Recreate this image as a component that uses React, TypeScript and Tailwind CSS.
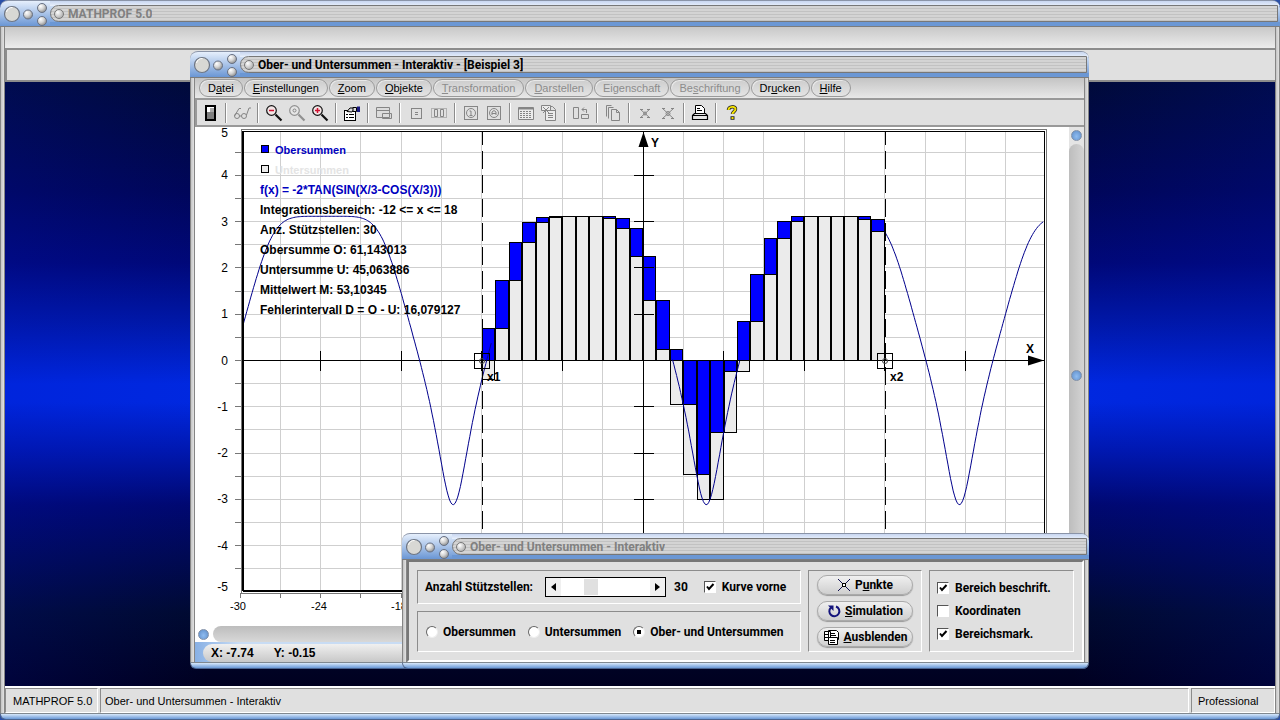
import type { ReactNode } from 'react';
import clsx from 'clsx';

const BASE_X = 448;
const BASE_Y = 233.5;
const UNIT_X = 13.43;
const UNIT_Y = 46.3;

const px = (x: number) => BASE_X + x * UNIT_X;
const py = (y: number) => BASE_Y - y * UNIT_Y;
const snap = (v: number) => Math.floor(v) + 0.5;

const f = (x: number) => -2 * Math.tan(Math.sin(x / 3 - Math.cos(x / 3)));

const from = -12;
const steps = 30;

const range = (start: number, end: number, step: number) =>
  Array.from({ length: Math.round((end - start) / step) + 1 }, (_, i) => start + i * step);

// the curve is hidden where it runs through the filled bars
const curves = [
  [-29.8, -11.3],
  [2.2, 7.2],
  [18, 29.8],
].map(([start, end]) =>
  range(start, end, 0.1)
    .map((x) => `${px(x).toFixed(1)},${py(f(x)).toFixed(1)}`)
    .join(' '),
);

const menu = [
  { pre: 'D', key: 'a', post: 'tei' },
  { pre: '', key: 'E', post: 'instellungen' },
  { pre: '', key: 'Z', post: 'oom' },
  { pre: '', key: 'O', post: 'bjekte' },
  { pre: '', key: 'T', post: 'ransformation', off: true },
  { pre: '', key: 'D', post: 'arstellen', off: true },
  { pre: 'Ei', key: 'g', post: 'enschaft', off: true },
  { pre: 'Be', key: 's', post: 'chriftung', off: true },
  { pre: 'Dr', key: 'u', post: 'cken' },
  { pre: '', key: 'H', post: 'ilfe' },
];

const info = [
  'Integrationsbereich: -12 <= x <= 18',
  'Anz. Stützstellen: 30',
  'Obersumme O: 61,143013',
  'Untersumme U: 45,063886',
  'Mittelwert M: 53,10345',
  'Fehlerintervall D = O - U: 16,079127',
];

/* ---------- window chrome ---------- */

function Knobs() {
  return (
    <svg width="50" height="26" viewBox="0 0 50 26" className="shrink-0" aria-hidden="true">
      <defs>
        <radialGradient id="knob" cx="0.35" cy="0.3" r="0.75">
          <stop offset="0" stopColor="#ffffff" />
          <stop offset="0.5" stopColor="#d4d4d4" />
          <stop offset="1" stopColor="#8a8a8a" />
        </radialGradient>
      </defs>
      <circle cx="12" cy="13" r="7.5" fill="#d8d8d4" stroke="#6e7684" strokeWidth="1.2" />
      <path d="M6.5 11a6 6 0 0 1 6-4.5" fill="none" stroke="#fff" />
      <circle cx="28" cy="13.5" r="4.5" fill="url(#knob)" stroke="#667084" />
      <circle cx="42" cy="7" r="4.5" fill="url(#knob)" stroke="#667084" />
      <circle cx="42" cy="20" r="4.5" fill="url(#knob)" stroke="#667084" />
    </svg>
  );
}

function TitleBar({ title, active }: { title: string; active?: boolean }) {
  return (
    <header className="flex h-[27px] shrink-0 items-center overflow-hidden rounded-t-lg border-t border-b border-t-[#8a94a8] border-b-[#7c7c7c] bg-linear-to-b from-[#e6effc] via-[#a9c3e8] to-[#6a96d4]">
      <Knobs />
      <div className="relative flex h-full min-w-0 flex-1 items-center">
        <div className="absolute inset-x-0 top-0 h-[5px] bg-linear-to-b from-[#c8d6f0] to-[#e8f0fc]" />
        <div className="absolute inset-x-0 bottom-0 h-[4px] bg-[#6b97d4]" />
        <div className="relative mr-[2px] flex h-[17px] w-full items-center gap-1 rounded-l-full border border-[#777] bg-[repeating-linear-gradient(to_bottom,#d4d4d4_0_2px,#c2c2c2_2px_3px)] pl-[3px]">
          <span className="size-[10px] shrink-0 rounded-full border border-[#777] bg-radial-[at_35%_30%] from-white to-[#9a9a9a]" />
          <h2
            className={clsx(
              "truncate font-['Roboto',sans-serif] text-[12px] leading-[14px] font-bold",
              active ? 'text-black' : 'text-[#808080]',
            )}
          >
            {title}
          </h2>
        </div>
      </div>
    </header>
  );
}

function BottomEdge() {
  return (
    <div className="h-[7px] shrink-0 rounded-b-md border border-t-[#808890] border-r-[#5c6c8c] border-b-[#4a6490] border-l-[#5c6c8c] bg-linear-to-b from-[#d8e8fa] to-[#6a98d6]" />
  );
}

function SideEdge() {
  return (
    <div className="w-[5px] shrink-0 border-r border-l border-[#858585] bg-linear-to-r from-[#c4c4c4] to-[#e2e2e2]" />
  );
}

function Ball() {
  return (
    <span className="block size-[11px] shrink-0 rounded-full border border-[#8090a8] bg-radial-[at_50%_60%] from-[#8fbcf0] to-[#5d8cc8]" />
  );
}

/* ---------- toolbar ---------- */

function Icon({ children }: { children: ReactNode }) {
  return (
    <svg width="18" height="18" viewBox="0 0 18 18" fill="none" stroke="#858585" aria-hidden="true">
      {children}
    </svg>
  );
}

function Lens({ color, sign, tint }: { color: string; sign: ReactNode; tint: string }) {
  return (
    <Icon>
      <circle cx="6.5" cy="6.5" r="4.8" stroke={color} strokeWidth="1.2" fill={tint} />
      {sign}
      <path d="M10.5 10.5l6 6" stroke={color} strokeWidth="2.2" />
    </Icon>
  );
}

const icons = {
  calc: (
    <Icon>
      <rect x="5" y="2" width="9" height="14" fill="#808080" stroke="#000" strokeWidth="2" />
      <path d="M6 5.5h7" stroke="#fff" strokeWidth="5" />
      <path d="M9 6h4" stroke="#aaa" strokeWidth="4" />
    </Icon>
  ),
  glasses: (
    <Icon>
      <circle cx="4" cy="12" r="2.5" />
      <circle cx="11" cy="12" r="2.5" />
      <path d="M6.5 12h2M1.5 12L6 4.5h2M13.5 11L16 4h2" />
    </Icon>
  ),
  zoomOut: <Lens color="#111" tint="#f3e6e6" sign={<path d="M4 6.5h5" stroke="#d01030" strokeWidth="1.5" />} />,
  zoomReset: <Lens color="#909090" tint="#e6e6e6" sign={<circle cx="6.5" cy="6.5" r="1.5" />} />,
  zoomIn: (
    <Lens color="#111" tint="#f3e6e6" sign={<path d="M4 6.5h5M6.5 4v5" stroke="#d01030" strokeWidth="1.5" />} />
  ),
  props: (
    <Icon>
      <rect x="1.5" y="6.5" width="11" height="10" fill="#fff" stroke="#000" />
      <path d="M3 10.5h2M6 10.5h5M3 13.5h2M6 13.5h5" stroke="#000" />
      <path d="M4 7.5l3-3.5h5l-3 4z" fill="#ddd" stroke="#000" />
      <path d="M10 3.5h3.5v4H10z" fill="#ddd" stroke="#000" />
      <path d="M14 2.5h3v5.5h-3z" fill="#1a1a80" stroke="none" />
    </Icon>
  ),
  panels: (
    <Icon>
      <path d="M1.5 3.5h13v10h-13zM1.5 6.5h13M7.5 9.5h9v5h-9z" fill="#dcdcdc" />
    </Icon>
  ),
  dot: (
    <Icon>
      <rect x="4.5" y="4.5" width="10" height="10" />
      <path d="M8 8.5h3M8 10.5h3" />
    </Icon>
  ),
  pair: (
    <Icon>
      <path d="M1.5 4.5h15v9h-15z" strokeDasharray="1 1" />
      <path d="M4.5 5.5h3v7h-3zM10.5 5.5h3v7h-3z" />
    </Icon>
  ),
  info: (
    <Icon>
      <rect x="2.5" y="2.5" width="13" height="13" />
      <circle cx="9" cy="9" r="4.5" />
      <path d="M7.5 7h1.5v4M7.5 11.5h3" />
    </Icon>
  ),
  at: (
    <Icon>
      <rect x="2.5" y="2.5" width="13" height="13" />
      <circle cx="9" cy="9" r="4.5" />
      <path d="M7 11V8l2-1.5L11 8v3M7 9.5h4" />
    </Icon>
  ),
  table: (
    <Icon>
      <path d="M1.5 3.5h15v12h-15z" fill="#ececec" />
      <path d="M2 4.5h14" strokeWidth="2" />
      <path d="M3 7.5h12M3 9.5h12M3 11.5h12M3 13.5h12" strokeDasharray="2 1" />
    </Icon>
  ),
  report: (
    <Icon>
      <path d="M1.5 1.5h9v5h-9zM5.5 6.5h10v10h-10z" fill="#ececec" />
      <path d="M3 3l6 6M9 3L3 9M8 9.5h5M8 11.5h5M8 13.5h5M10.5 2.5h2l3 3v2" />
    </Icon>
  ),
  swap: (
    <Icon>
      <path d="M1.5 3.5h5v11h-5zM9.5 10.5h7v4h-7zM14.5 9V5.5H10M12 3.5L10 5.5l2 2" />
    </Icon>
  ),
  copies: (
    <Icon>
      <path d="M2.5 12.5v-11h5M4.5 14.5v-11h5M7.5 5.5h5l3 3v8h-8zM12.5 5.5v3h3" />
    </Icon>
  ),
  cross: (
    <Icon>
      <path d="M4 5l10 9M14 5L4 14M4 5.5h3M11 5.5h3M4 13.5h3M11 13.5h3" />
      <circle cx="9" cy="9.5" r="1.5" />
    </Icon>
  ),
  crossBox: (
    <Icon>
      <path d="M3 4l12 11M15 4L3 15M3 4.5h3M12 4.5h3M3 14.5h3M12 14.5h3" />
      <circle cx="9" cy="9.5" r="2" />
    </Icon>
  ),
  print: (
    <Icon>
      <path d="M4.5 9.5v-8h6l3 3v5" fill="#fff" stroke="#000" />
      <path d="M6 4.5h3M6 6.5h5" stroke="#000" />
      <path d="M1.5 11.5l2-2h11l2 2v4h-15z" fill="#e4e4e4" stroke="#000" strokeWidth="1.2" />
      <path d="M1.5 11.5h15" stroke="#000" />
    </Icon>
  ),
  help: (
    <Icon>
      <path d="M5.5 6c0-4 7-4 7-1 0 2.5-3 3-3 5" stroke="#222" strokeWidth="3.500" />
      <path d="M7.5 14h4" stroke="#222" strokeWidth="3.500" />
      <path d="M5.5 6c0-4 7-4 7-1 0 2.5-3 3-3 5M9.500 13v2" stroke="#f2e000" strokeWidth="2" />
    </Icon>
  ),
};

const toolbar: { id: keyof typeof icons; label: string; off?: boolean }[][] = [
  [{ id: 'calc', label: 'Rechner' }],
  [{ id: 'glasses', label: 'Ansicht', off: true }],
  [
    { id: 'zoomOut', label: 'Verkleinern' },
    { id: 'zoomReset', label: 'Originalgröße', off: true },
    { id: 'zoomIn', label: 'Vergrößern' },
  ],
  [{ id: 'props', label: 'Einstellungen' }],
  [{ id: 'panels', label: 'Fenster', off: true }],
  [
    { id: 'dot', label: 'Punkt', off: true },
    { id: 'pair', label: 'Bereich', off: true },
  ],
  [
    { id: 'info', label: 'Info', off: true },
    { id: 'at', label: 'Beschriftung', off: true },
  ],
  [
    { id: 'table', label: 'Tabelle', off: true },
    { id: 'report', label: 'Bericht', off: true },
  ],
  [{ id: 'swap', label: 'Tauschen', off: true }],
  [{ id: 'copies', label: 'Kopieren', off: true }],
  [
    { id: 'cross', label: 'Punkte', off: true },
    { id: 'crossBox', label: 'Punkte löschen', off: true },
  ],
  [{ id: 'print', label: 'Drucken' }],
  [{ id: 'help', label: 'Hilfe' }],
];

/* ---------- chart ---------- */

function Bars() {
  return (
    <g stroke="#000">
      {Array.from({ length: steps }, (_, i) => {
        const x = from + i;
        const lo = Math.min(f(x), f(x + 1));
        const hi = Math.max(f(x), f(x + 1));
        const left = snap(px(x) + 0.5);
        const width = snap(px(x + 1) + 0.5) - 1 - left;
        const bar = (v: number, fill: string) => (
          <rect
            key={fill}
            x={left}
            y={snap(Math.min(py(v), BASE_Y))}
            width={width}
            height={Math.round(Math.abs(py(v) - BASE_Y))}
            fill={fill}
          />
        );
        const upper = bar(hi, '#0000ff');
        const lower = bar(lo, '#ebebeb');
        return <g key={x}>{hi > 0 ? [upper, lower] : [lower, upper]}</g>;
      })}
    </g>
  );
}

function Chart() {
  return (
    <svg viewBox="0 0 874 499" preserveAspectRatio="xMinYMin slice" className="block size-full bg-white text-[11px]">
      <g stroke="#cfcfcf" shapeRendering="crispEdges">
        {range(-27, 27, 3).map((x) => (
          <line key={x} x1={snap(px(x))} x2={snap(px(x))} y1="5" y2="464" />
        ))}
        {range(-4.5, 4.5, 0.5).map((y) => (
          <line key={y} x1="48" x2="849" y1={snap(py(y))} y2={snap(py(y))} />
        ))}
      </g>

      <g shapeRendering="crispEdges">
        <Bars />
      </g>

      <g stroke="#000" shapeRendering="crispEdges">
        <line x1="48" x2="850" y1="233.5" y2="233.5" />
        <line x1="448.5" x2="448.5" y1="5" y2="464" />
        {range(-24, 24, 6).map((x) => (
          <line key={x} x1={snap(px(x))} x2={snap(px(x))} y1="224" y2="244" />
        ))}
        {range(-4, 4, 1).map((y) => (
          <line key={y} x1="439" x2="459" y1={snap(py(y))} y2={snap(py(y))} />
        ))}
      </g>

      {curves.map((points) => (
        <polyline key={points} points={points} fill="none" stroke="#00008c" />
      ))}

      <g stroke="#000" strokeDasharray="18 6" strokeDashoffset="5" shapeRendering="crispEdges">
        <line x1="287.5" x2="287.5" y1="5" y2="464" />
        <line x1="690.5" x2="690.5" y1="5" y2="464" />
      </g>

      <path d="M448.5 5l5 15h-10zM849 233.5l-16 5v-10z" />
      {[287, 690].map((x) => (
        <g key={x} fill="none" stroke="#000">
          <rect x={x - 7.5} y="226.5" width="15" height="15" />
          <circle cx={x} cy="234" r="2.5" stroke="#444" />
        </g>
      ))}

      {/* plot frame */}
      <g fill="none" shapeRendering="crispEdges">
        <path d="M46.5 466V2.5H851.5V466" stroke="#777" />
        <path d="M47.5 464V4.5H849.5V464.500H48" stroke="#000" />
        <path d="M46 466.5h806" stroke="#777" />
        <path d="M48.5 464V5M849 463.5H48" stroke="#000" />
        {range(-4.5, 4.5, 0.5).map((y) => (
          <line key={y} x1="40" x2="46" y1={snap(py(y))} y2={snap(py(y))} stroke="#777" />
        ))}
        {range(-30, 30, 3).map((x) => (
          <line key={x} x1={snap(px(x))} x2={snap(px(x))} y1="466" y2="471" stroke="#777" />
        ))}
      </g>

      <g textAnchor="end" fontSize="12">
        {range(-4, 4, 1).map((y) => (
          <text key={y} x="33" y={Math.round(py(y)) + 4}>
            {y}
          </text>
        ))}
        <text x="33" y="10">5</text>
        <text x="33" y="464">-5</text>
      </g>
      <g textAnchor="middle">
        {range(-30, -18, 6).map((x) => (
          <text key={x} x={Math.round(px(x)) - 2} y="483">
            {x}
          </text>
        ))}
      </g>

      <g fontWeight="bold">
        <rect x="66.5" y="18.5" width="7" height="7" fill="#0000ff" stroke="#000" />
        <rect x="66.5" y="38.5" width="7" height="7" fill="#ebebeb" stroke="#000" />
        <text x="80" y="27" fill="#0000c0">Obersummen</text>
        <text x="80" y="47" fill="#e4e4e4">Untersummen</text>
        <g fontSize="12">
          <text x="65" y="67" fill="#0000c0">f(x) = -2*TAN(SIN(X/3-COS(X/3)))</text>
          {info.map((line, i) => (
            <text key={line} x="65" y={87 + i * 20}>
              {line}
            </text>
          ))}
          <text x="456" y="20">Y</text>
          <text x="831" y="226">X</text>
          <text x="292" y="254">x1</text>
          <text x="695" y="254">x2</text>
        </g>
      </g>
    </svg>
  );
}

function PlotWindow() {
  return (
    <section className="absolute top-[51px] left-[190px] flex h-[618px] w-[899px] flex-col">
      <TitleBar title="Ober- und Untersummen - Interaktiv - [Beispiel 3]" active />
      <div className="flex min-h-0 flex-1">
        <SideEdge />
        <div className="flex min-w-0 flex-1 flex-col">
          <nav className="flex h-[22px] shrink-0 items-center gap-px border-b-2 border-[#999] bg-linear-to-b from-[#c4c4c4] to-[#e8e8e8] pl-1">
            {menu.map((m) => (
              <button
                key={m.pre + m.key + m.post}
                disabled={m.off}
                className="h-[18px] rounded-full border border-[#9a9a9a] bg-linear-to-b from-[#cdcdcd] to-[#e4e4e4] px-2 text-[11px] leading-4 shadow-[inset_1px_1px_0_#e8e8e8] disabled:text-[#8c8c8c]"
              >
                {m.pre}
                <u>{m.key}</u>
                {m.post}
              </button>
            ))}
          </nav>
          <div className="flex h-[27px] shrink-0 items-center border-b-2 border-l-2 border-[#999] bg-[#e0e0e0] pl-px">
            {toolbar.map((group, i) => (
              <div key={i} className="flex items-center">
                {i > 0 && <span className="mx-1 h-5 w-px bg-[#8c8c8c] shadow-[1px_0_0_#fff]" />}
                {group.map((b) => (
                  <button key={b.id} aria-label={b.label} disabled={b.off} className="flex w-[23px] justify-center">
                    {icons[b.id]}
                  </button>
                ))}
              </div>
            ))}
          </div>
          <div className="flex min-h-0 flex-1">
            <div className="min-w-0 flex-1">
              <Chart />
            </div>
            <div className="flex w-[15px] flex-col items-center bg-[#e4e4e4]">
              <div className="py-[3px]">
                <Ball />
              </div>
              <div className="flex w-full flex-1 items-center justify-center rounded-t-full bg-linear-to-r from-[#bdbdbd] to-[#d4d4d4] pb-5">
                <Ball />
              </div>
            </div>
          </div>
          <div className="flex h-[16px] shrink-0 items-center bg-white pl-[3px]">
            <Ball />
            <div className="ml-1 h-full flex-1 rounded-l-full bg-linear-to-b from-[#bdbdbd] to-[#d8d8d8]" />
          </div>
          <footer className="flex h-[20px] shrink-0 items-end bg-linear-to-r from-[#88b0e4] to-[#c8dcf4] to-5% pl-2">
            <div className="flex h-[18px] flex-1 items-center gap-5 rounded-l-full bg-linear-to-b from-[#f0f0f0] to-[#c8c8c8] pl-2 text-[12px] font-bold">
              <span>X: -7.74</span>
              <span>Y: -0.15</span>
            </div>
          </footer>
        </div>
        <SideEdge />
      </div>
      <BottomEdge />
    </section>
  );
}

/* ---------- dialog ---------- */

function Panel({ className, children }: { className?: string; children: ReactNode }) {
  return (
    <div className={clsx('border border-t-[#8c8c8c] border-r-white border-b-white border-l-[#8c8c8c]', className)}>
      {children}
    </div>
  );
}

function Check({ label, checked }: { label: string; checked?: boolean }) {
  return (
    <label className="flex items-center gap-[6px]">
      <span className="relative flex size-[12px]">
        <input
          type="checkbox"
          defaultChecked={checked}
          className="peer size-[12px] appearance-none border border-t-[#555] border-r-white border-b-white border-l-[#555] bg-white"
        />
        <svg
          viewBox="0 0 12 12"
          className="pointer-events-none absolute inset-0 hidden peer-checked:block"
          fill="none"
          stroke="#000"
          strokeWidth="2"
        >
          <path d="M3 5.5l2 2.5 4.5-5" />
        </svg>
      </span>
      {label}
    </label>
  );
}

function Radio({ label, checked }: { label: string; checked?: boolean }) {
  return (
    <label className="flex items-center gap-[5px]">
      <input
        type="radio"
        name="summe"
        defaultChecked={checked}
        className="size-[12px] appearance-none rounded-full border border-t-[#666] border-r-[#eee] border-b-[#eee] border-l-[#666] bg-white checked:bg-radial checked:from-black checked:from-30% checked:to-white checked:to-35%"
      />
      {label}
    </label>
  );
}

function PillButton({ icon, children }: { icon: ReactNode; children: ReactNode }) {
  return (
    <button className="flex h-5 items-center justify-center gap-1 rounded-full border border-[#aaa] bg-linear-to-b from-[#f0f0f0] to-[#cfcfcf] font-bold shadow-[0_1px_1px_#999]">
      {icon}
      <span>{children}</span>
    </button>
  );
}

function Dialog() {
  return (
    <section className="absolute top-[533px] left-[402px] flex h-[136px] w-[687px] flex-col font-['Roboto',sans-serif] text-[12px] font-bold whitespace-nowrap">
      <TitleBar title="Ober- und Untersummen - Interaktiv" />
      <div className="flex min-h-0 flex-1">
        <SideEdge />
        <div className="flex min-w-0 flex-1 gap-[7px] border-2 border-[#777] border-r-white border-b-white bg-[#e0e0e0] px-2 py-2">
          <div className="flex flex-1 flex-col gap-[7px]">
            <Panel className="flex h-[34px] items-center px-[7px]">
              <label htmlFor="anzahl">Anzahl Stützstellen:</label>
              <div className="ml-3 flex h-5 w-[121px] items-stretch border border-black bg-white">
                <button aria-label="Weniger" className="flex w-[15px] items-center justify-center bg-[#f0f0f0]">
                  <svg width="5" height="8" viewBox="0 0 5 8">
                    <path d="M5 0v8L0 4z" />
                  </svg>
                </button>
                <input
                  id="anzahl"
                  type="range"
                  min="0"
                  max="100"
                  defaultValue="30"
                  className="min-w-0 flex-1 appearance-none bg-white [&::-webkit-slider-thumb]:h-[16px] [&::-webkit-slider-thumb]:w-[14px] [&::-webkit-slider-thumb]:appearance-none [&::-webkit-slider-thumb]:bg-[#e0e0e0]"
                />
                <button aria-label="Mehr" className="flex w-[15px] items-center justify-center bg-[#f0f0f0]">
                  <svg width="5" height="8" viewBox="0 0 5 8">
                    <path d="M0 0v8l5-4z" />
                  </svg>
                </button>
              </div>
              <output htmlFor="anzahl" className="mr-4 ml-2">30</output>
              <Check label="Kurve vorne" checked />
            </Panel>
            <Panel className="flex flex-1 items-center gap-3 px-2">
              <Radio label="Obersummen" />
              <Radio label="Untersummen" />
              <Radio label="Ober- und Untersummen" checked />
            </Panel>
          </div>
          <Panel className="flex w-[114px] flex-col justify-between px-2 py-[4px]">
            <PillButton
              icon={
                <svg width="14" height="14" viewBox="0 0 14 14" fill="none" stroke="#101050" aria-hidden="true">
                  <path d="M1 1l12 12M13 1L1 13" />
                  <rect x="5.5" y="5.5" width="3" height="3" fill="#fff" stroke="#000" />
                </svg>
              }
            >
              P<u>u</u>nkte
            </PillButton>
            <PillButton
              icon={
                <svg width="14" height="14" viewBox="0 0 14 14" fill="none" stroke="#14147c" aria-hidden="true">
                  <path d="M9 2.5a5 5 0 1 1-5 1" strokeWidth="2" />
                  <path d="M1 1.5h5.5V7z" fill="#14147c" stroke="none" />
                </svg>
              }
            >
              <u>S</u>imulation
            </PillButton>
            <PillButton
              icon={
                <svg width="17" height="17" viewBox="0 0 17 17" fill="#fff" stroke="#000" aria-hidden="true">
                  <path d="M1.5 2.5h6v9h-6zM5.5 1.5h8l2 2v7h-10z" />
                  <path d="M5.5 8.5h9v7h-9zM7 4.5h5M7 6.5h6M7 11.5h5M7 13.5h5M1 5.5h4M2 8.5h3" />
                </svg>
              }
            >
              <u>A</u>usblenden
            </PillButton>
          </Panel>
          <Panel className="flex w-[145px] flex-col justify-between px-[7px] py-2">
            <Check label="Bereich beschrift." checked />
            <Check label="Koordinaten" />
            <Check label="Bereichsmark." checked />
          </Panel>
        </div>
        <SideEdge />
      </div>
      <BottomEdge />
    </section>
  );
}

export default function App() {
  return (
    <main className="relative flex h-screen w-full flex-col overflow-hidden bg-[#2a50a8] font-['Liberation_Sans',Arial,sans-serif] text-black">
      <TitleBar title="MATHPROF 5.0" />
      <div className="flex min-h-0 flex-1">
        <SideEdge />
        <div className="flex min-w-0 flex-1 flex-col">
          <div className="h-[23px] border-b-2 border-[#8c8c8c] bg-linear-to-b from-[#c8c8c8] to-[#ececec]" />
          <div className="h-[32px] border-b-2 border-l-2 border-[#8c8c8c] bg-[#e0e0e0]" />
          <div className="flex-1 bg-[linear-gradient(to_right,rgba(0,20,200,0.16),transparent_16%,transparent_84%,rgba(0,20,200,0.16)),linear-gradient(to_bottom,#000a38,#000658_18%,#000878_30%,#0018a8_40%,#0028e0_50%,#0028e0_53%,#0018b0_61%,#000870_70%,#000a30_88%,#000020)]" />
          <footer className="flex h-[27px] shrink-0 items-center gap-[2px] border-t-2 border-white bg-[#e0e0e0] text-[11px] whitespace-nowrap">
            <Panel className="h-full w-[93px] px-[7px] leading-6">MATHPROF 5.0</Panel>
            <Panel className="h-full flex-1 px-1 leading-6">Ober- und Untersummen - Interaktiv</Panel>
            <Panel className="h-full w-[84px] px-[6px] leading-6">Professional</Panel>
          </footer>
        </div>
        <SideEdge />
      </div>
      <BottomEdge />

      <PlotWindow />
      <Dialog />
    </main>
  );
}
